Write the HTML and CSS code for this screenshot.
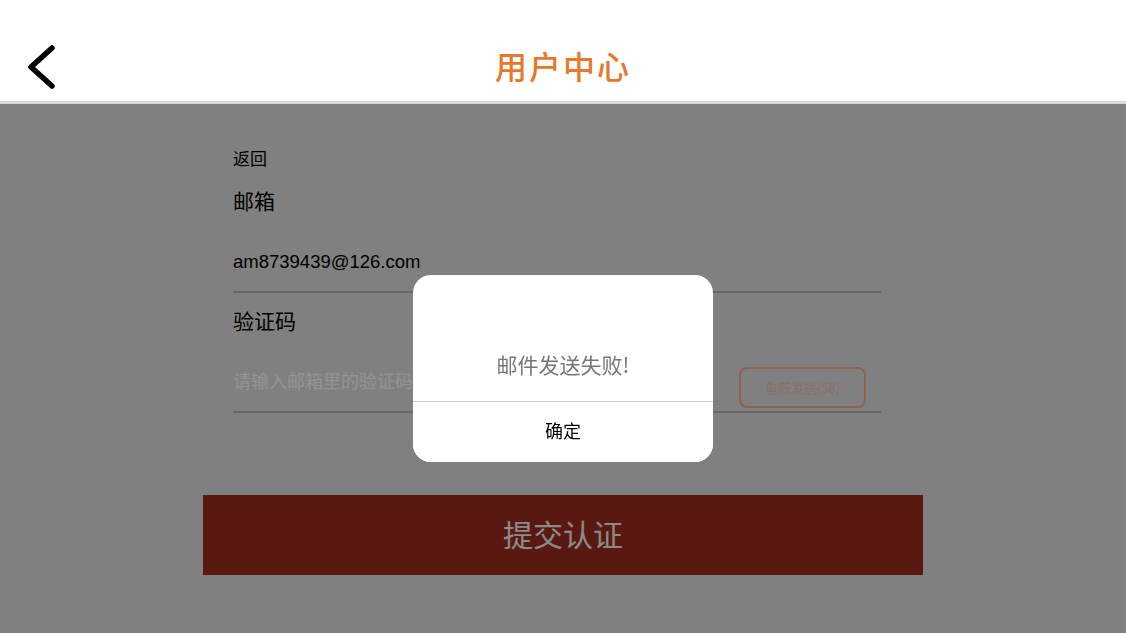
FILE: index.html
```html
<!DOCTYPE html>
<html lang="zh-CN">
<head>
  <meta charset="UTF-8" />
  <meta name="viewport" content="width=device-width, initial-scale=1" />
  <title>用户中心</title>
  <link rel="stylesheet" href="styles.css">
</head>

<body>
  <!-- Barra de topo -->
  <header class="topo">
    <a class="voltar" href="#">
      <svg width="32" height="44" viewBox="0 0 32 44">
        <polyline points="26,3 5,22 26,41" fill="none" stroke="#000" stroke-width="5.5" stroke-linecap="round" stroke-linejoin="round" />
      </svg>
    </a>
    <h1 class="titulo">用户中心</h1>
  </header>

  <main class="pagina">
    <form class="formulario">
      <a class="link-voltar" href="#">返回</a>

      <label class="rotulo">邮箱</label>
      <div class="campo">
        <span class="valor">am8739439@126.com</span>
      </div>

      <label class="rotulo rotulo-codigo">验证码</label>
      <div class="campo campo-codigo">
        <span class="placeholder">请输入邮箱里的验证码</span>
        <button type="button" class="reenviar">重新发送(58)</button>
      </div>
    </form>

    <button type="button" class="enviar">提交认证</button>

    <!-- Máscara + diálogo -->
    <div class="mascara">
      <div class="dialogo">
        <p class="mensagem">邮件发送失败!</p>
        <button type="button" class="confirmar">确定</button>
      </div>
    </div>
  </main>
</body>
</html>
```

FILE: styles.css
```css
* {
  box-sizing: border-box;
}

body {
  margin: 0;
  min-height: 100vh;
  background: #d5d5d5;
  font-family: "Liberation Sans", "Noto Sans CJK SC", sans-serif;
  color: #000;
  overflow: hidden;
}

.topo {
  position: relative;
  height: 104px;
  padding-top: 34px;
  background: #fff;
  border-bottom: 3px solid #d9d9d9;
  display: flex;
  justify-content: center;
}

.voltar {
  position: absolute;
  left: 26px;
  top: 45px;
  display: block;
  line-height: 0;
}

.titulo {
  margin: 0;
  height: 66px;
  line-height: 62px;
  font-size: 32px;
  font-weight: 500;
  letter-spacing: 2px;
  color: #e8782c;
  font-family: "Noto Sans CJK SC", sans-serif;
}

.pagina {
  position: relative;
  height: calc(100vh - 104px);
  width: 720px;
  margin: 0 auto;
  font-family: "Noto Sans CJK SC", sans-serif;
}

.formulario {
  display: flex;
  flex-direction: column;
  padding: 0 42px 0 30px;
}

.link-voltar {
  margin-top: 42px;
  font-size: 17px;
  line-height: 24px;
  color: #000;
  text-decoration: none;
}

.rotulo {
  margin-top: 15px;
  font-size: 21px;
  line-height: 30px;
}

.rotulo-codigo {
  margin-top: 12px;
}

.campo {
  display: flex;
  align-items: flex-end;
  justify-content: space-between;
  padding: 32px 0 14px;
  border-bottom: 2px solid #afafaf;
}

.valor {
  font-family: "Liberation Sans", sans-serif;
  font-size: 18.5px;
  line-height: 30px;
}

.campo-codigo {
  padding: 32px 0 3px;
}

.placeholder {
  font-size: 18px;
  line-height: 24px;
  margin-bottom: 16px;
  color: #f5f5f5;
}

.reenviar {
  width: 127px;
  height: 41px;
  margin-right: 15px;
  border: 2px solid #e9a385;
  border-radius: 8px;
  background: transparent;
  color: #e6bba7;
  font-family: "Noto Sans CJK SC", sans-serif;
  font-size: 13px;
}

.enviar {
  display: block;
  width: 720px;
  height: 80px;
  margin-top: 82px;
  padding: 0 0 5px;
  border: none;
  background: #962b1b;
  color: #e6e6e6;
  font-family: "Noto Sans CJK SC", sans-serif;
  font-size: 30px;
}

.mascara {
  position: fixed;
  top: 104px;
  left: 0;
  right: 0;
  bottom: 0;
  background: rgba(0, 0, 0, 0.4);
  display: flex;
  align-items: center;
  justify-content: center;
}

.dialogo {
  width: 300px;
  background: #fff;
  border-radius: 18px;
  overflow: hidden;
  text-align: center;
}

.mensagem {
  margin: 0;
  padding: 74px 0 22px;
  font-size: 21px;
  line-height: 30px;
  color: #777;
  border-bottom: 1px solid #d0d0d0;
}

.confirmar {
  display: block;
  width: 100%;
  height: 60px;
  padding: 0 0 4px;
  border: none;
  background: #fff;
  font-family: "Noto Sans CJK SC", sans-serif;
  font-size: 18px;
  color: #000;
}
```
